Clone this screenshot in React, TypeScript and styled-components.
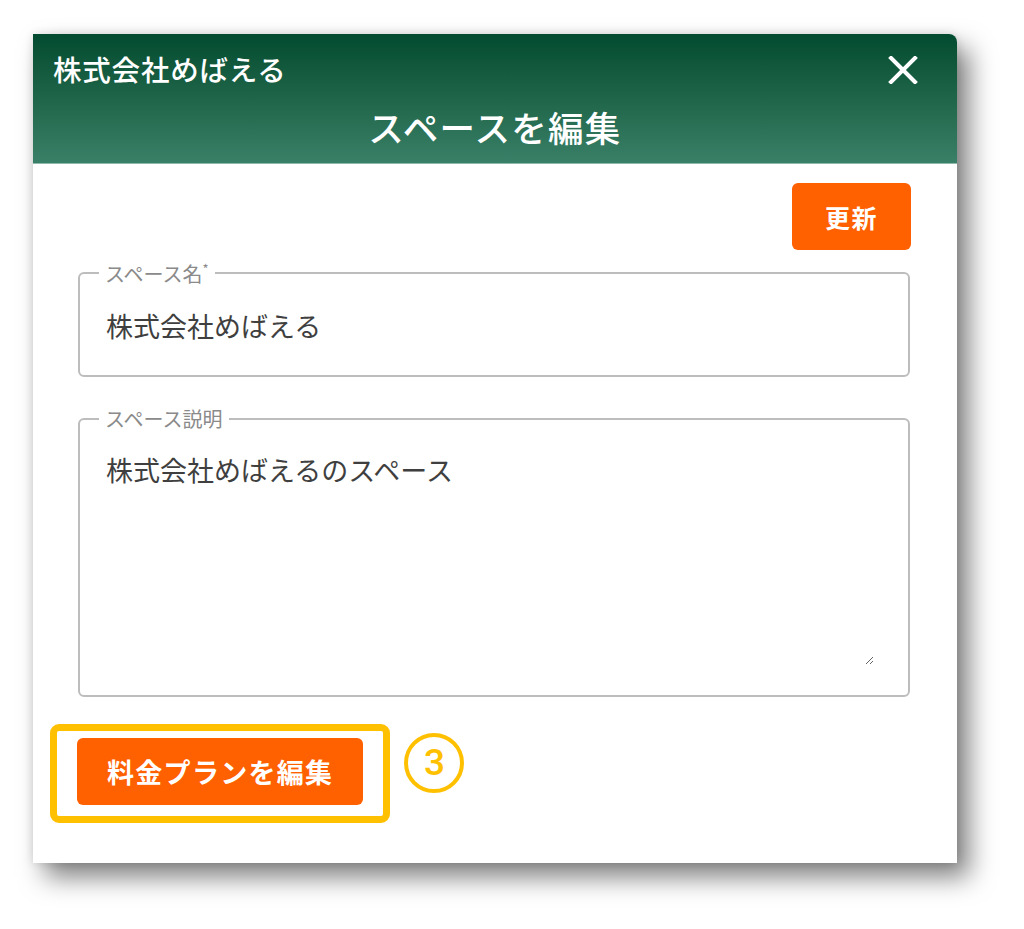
import styled, { createGlobalStyle } from "styled-components"

const GlobalStyle = createGlobalStyle`
	html, body {
		margin: 0;
		padding: 0;
		background: #ffffff;
	}
	body {
		font-family: "Noto Sans CJK JP", "Noto Sans", sans-serif;
	}
`

const Page = styled.div`
	width: 1024px;
	height: 929px;
	padding: 34px 0 0 33px;
	box-sizing: border-box;
`

const Dialog = styled.div`
	width: 924px;
	background: #ffffff;
	border-top-right-radius: 8px;
	box-shadow: 12px 14px 26px rgba(0, 0, 0, 0.5), 0 0 10px rgba(0, 0, 0, 0.12);
	overflow: hidden;
`

const Header = styled.div`
	height: 130px;
	box-sizing: border-box;
	background: linear-gradient(180deg, #034b30 0%, #1f6549 50%, #3a8068 100%);
	border-bottom: 1px solid #8fb9a8;
	padding: 16px 38px 0 20px;
	display: flex;
	flex-direction: column;
	color: #ffffff;
`

const TopRow = styled.div`
	display: flex;
	justify-content: space-between;
	align-items: center;
	height: 36px;
`

const Company = styled.div`
	font-size: 28.5px;
	font-weight: 500;
	letter-spacing: 0.8px;
`

const CloseButton = styled.button`
	background: none;
	border: none;
	padding: 0;
	margin-top: 4px;
	width: 32px;
	height: 32px;
	display: grid;
	place-items: center;
	cursor: pointer;
`

const Title = styled.h1`
	margin: 20px 0 0 18px;
	font-size: 35.5px;
	font-weight: 500;
	line-height: 1.2;
	text-align: center;
	letter-spacing: 1.3px;
`

const Body = styled.div`
	padding: 19px 47px 40px 45px;
	display: flex;
	flex-direction: column;
`

const Toolbar = styled.div`
	display: flex;
	justify-content: flex-end;
	margin-right: -1px;
`

const OrangeButton = styled.button<{ $wide?: boolean }>`
	background: #ff6000;
	color: #ffffff;
	border: none;
	border-radius: 6px;
	height: 67px;
	padding: 0 ${(p) => (p.$wide ? "30px" : "33px")};
	font-family: inherit;
	font-size: ${(p) => (p.$wide ? "27px" : "25px")};
	font-weight: 700;
	letter-spacing: ${(p) => (p.$wide ? "1.3px" : "1.5px")};
	cursor: pointer;
`

const Field = styled.fieldset<{ $tall?: boolean }>`
	margin: ${(p) => (p.$tall ? "32px" : "12px")} 0 0 0;
	padding: ${(p) => (p.$tall ? "22px 34px 0 26px" : "22px 27px 0 26px")};
	border: 2px solid #bdbdbd;
	border-radius: 6px;
	min-width: 0;
	height: ${(p) => (p.$tall ? "288px" : "115px")};
	box-sizing: border-box;
`

const Legend = styled.legend`
	margin-left: -7px;
	padding: 0 6px;
	font-size: 20px;
	line-height: 1;
	color: #8a8a8a;
	font-weight: 400;
	sup {
		font-size: 13px;
	}
`

const TextInput = styled.input`
	display: block;
	border: none;
	outline: none;
	width: 100%;
	padding: 0;
	font-family: inherit;
	font-size: 27px;
	color: #3f3f3f;
	background: transparent;
`

const TextArea = styled.textarea`
	display: block;
	box-sizing: border-box;
	border: none;
	outline: none;
	width: 100%;
	height: 214px;
	padding: 0;
	font-family: inherit;
	font-size: 27px;
	line-height: 1.4;
	color: #3f3f3f;
	background: transparent;
	resize: both;
`

const PlanRow = styled.div`
	display: flex;
	align-items: center;
	gap: 14px;
	margin: 27px 0 0 -28px;
`

const Highlight = styled.div`
	border: 7px solid #ffc000;
	border-radius: 9px;
	padding: 7px 20px 11px 20px;
`

const StepBadge = styled.div`
	width: 52px;
	height: 52px;
	border: 4px solid #ffc000;
	border-radius: 50%;
	display: grid;
	place-items: center;
	color: #ffc000;
	font-family: Roboto, "Noto Sans", sans-serif;
	font-size: 37px;
	font-weight: 500;
	line-height: 1;
	margin-top: -22px;
`

export default function App() {
	return (
		<>
			<GlobalStyle />
			<Page>
				<Dialog>
					<Header>
						<TopRow>
							<Company>株式会社めばえる</Company>
							<CloseButton aria-label='閉じる'>
								<svg width='30' height='28' viewBox='0 0 30 28'>
									<path d='M3 2 L27 26 M27 2 L3 26' stroke='#ffffff' strokeWidth='4' strokeLinecap='square' />
								</svg>
							</CloseButton>
						</TopRow>
						<Title>スペースを編集</Title>
					</Header>
					<Body>
						<Toolbar>
							<OrangeButton>更新</OrangeButton>
						</Toolbar>
						<Field>
							<Legend>
								スペース名<sup>*</sup>
							</Legend>
							<TextInput readOnly value='株式会社めばえる' />
						</Field>
						<Field $tall>
							<Legend>スペース説明</Legend>
							<TextArea readOnly value='株式会社めばえるのスペース' />
						</Field>
						<PlanRow>
							<Highlight>
								<OrangeButton $wide>料金プランを編集</OrangeButton>
							</Highlight>
							<StepBadge>3</StepBadge>
						</PlanRow>
					</Body>
				</Dialog>
			</Page>
		</>
	)
}
